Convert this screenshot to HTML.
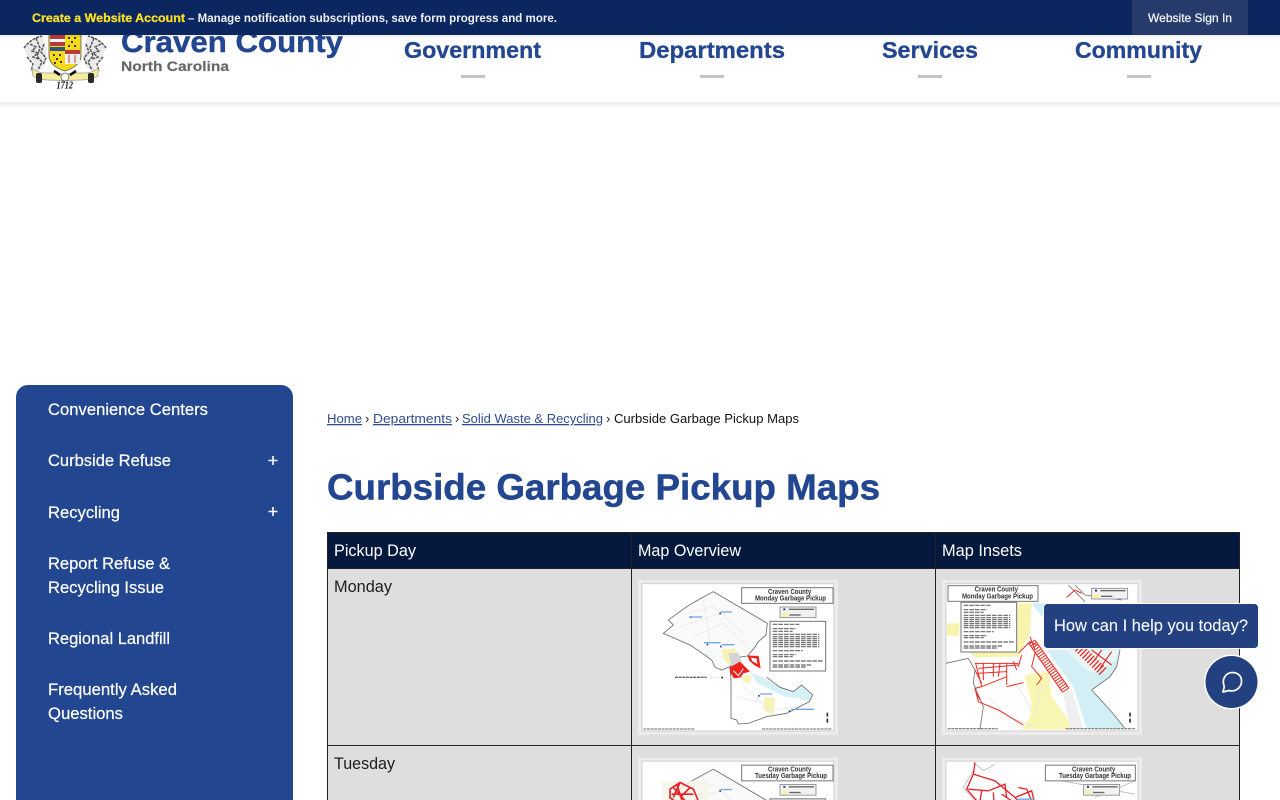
<!DOCTYPE html>
<html lang="en"><head><meta charset="utf-8"><title>Curbside Garbage Pickup Maps</title>
<style>
html,body{margin:0;padding:0;background:#fff;width:1280px;height:800px;overflow:hidden}
svg{display:block}
text{font-family:"Liberation Sans",Arial,sans-serif}
a{cursor:pointer}
.nav{font-size:23px;font-weight:700;fill:#234690;stroke:#234690;stroke-width:.3px}
.side{font-size:16.5px;fill:#fff}
.bc{font-size:13px}
.lnk{fill:#2f4d8f;text-decoration:underline}
.th{font-size:16.5px;fill:#fff}
.td{font-size:16.5px;fill:#1c1c1c}
.t1{font-size:21px;font-weight:700;fill:#333}
</style></head><body>
<svg width="1280" height="800" viewBox="0 0 1280 800" xmlns="http://www.w3.org/2000/svg">
<defs>
<linearGradient id="sh" x1="0" y1="0" x2="0" y2="1"><stop offset="0" stop-color="#000" stop-opacity=".07"/><stop offset="1" stop-color="#000" stop-opacity="0"/></linearGradient>
<clipPath id="pg"><rect x="0" y="0" width="1280" height="800"/></clipPath>
<filter id="b" x="-5%" y="-5%" width="110%" height="110%"><feGaussianBlur stdDeviation="1"/></filter>
<filter id="c" x="-5%" y="-5%" width="110%" height="110%"><feGaussianBlur stdDeviation=".35"/></filter>

<g id="frame">
<rect x="24" y="30" width="600" height="465" fill="#ececec"/>
<rect x="36" y="41" width="576" height="442" fill="#fff" stroke="#cfcfcf" stroke-width="3"/>
</g>
<g id="county">
<path d="M360,305L400,322L450,352L490,365L515,345L545,375L538,395L505,385L465,380L420,358L380,338Z" fill="#d6f1f6"/>
<path d="M250,65L412,160L408,195L385,215L372,235L352,258L325,262L300,290L275,300L255,292L245,270L210,245L180,225L100,190L130,165L115,150L170,110L195,95Z" fill="#fafafa" stroke="#6a6a6a" stroke-width="2.500"/>
<path d="M300,295L303,325L303,445L320,450L325,462L355,460L410,440L470,430L538,395L548,375L515,345L490,365L450,352L410,322" fill="none" stroke="#6a6a6a" stroke-width="2.500"/>
<path d="M275,238L315,235L325,260L295,285L280,265Z" fill="#f6f3b5"/>
<path d="M295,250L325,248L335,275L305,290Z" fill="#d4d4d4"/>
<path d="M405,380L435,385L430,435L400,420Z" fill="#f6f3b5"/>
<path d="M335,320L365,315L360,340L340,338Z" fill="#f6f3b5"/>
<path d="M170,130L250,110L340,190M190,200L280,160L350,230M340,350L420,420L500,410M320,380L400,400M220,90L240,220M150,170L300,120" fill="none" stroke="#ececec" stroke-width="3"/>
<rect x="180" y="139" width="5" height="5" fill="#25408f"/><rect x="268" y="128" width="5" height="5" fill="#25408f"/><rect x="230" y="221" width="5" height="5" fill="#25408f"/><rect x="270" y="227" width="5" height="5" fill="#25408f"/><rect x="384" y="375" width="5" height="5" fill="#25408f"/><rect x="476" y="421" width="5" height="5" fill="#25408f"/>
<path d="M178,141h38M272,126h34M222,218h50M276,224h38M390,372h36M484,418h68" stroke="#6fa6e6" stroke-width="4"/>
<path d="M135,322h95" stroke="#666" stroke-width="4" stroke-dasharray="9 2"/><path d="M240,322h30" stroke="#ddd" stroke-width="2"/><rect x="274" y="320" width="5" height="5" fill="#222"/>
<path d="M592,428v12M592,446v12" stroke="#333" stroke-width="5"/>
<path d="M40,477h155M396,477h210" stroke="#888" stroke-width="4" stroke-dasharray="9 2"/>
</g>
<g id="tbox">
<rect x="335" y="53" width="274" height="47" fill="#fff" stroke="#777" stroke-width="3"/>
<rect x="450" y="111" width="108" height="32" fill="#f2f2f2" stroke="#888" stroke-width="2.500"/>
<rect x="476" y="116" width="76" height="4" fill="#666"/><rect x="460" y="115" width="6" height="6" fill="#25408f"/>
<rect x="455" y="130" width="18" height="10" fill="#f6f3a8"/><rect x="478" y="133" width="34" height="4" fill="#666"/>
</g>
<g id="info">
<rect x="420" y="154" width="167" height="149" fill="#fff" stroke="#777" stroke-width="3"/>
<path d="M428,163h80M428,176h70M428,184h60M428,193h140M428,200h140M428,206h140M428,212h140M428,218h140M428,224h140M428,230h140M428,242h90M428,254h70M428,260h60M428,273h150M428,285h115M428,291h100" stroke="#666" stroke-width="3.500" stroke-dasharray="14 3"/>
</g>
</defs>

<!-- header -->
<rect x="0" y="35" width="1280" height="67" fill="#fff"/>
<rect x="0" y="102" width="1280" height="7" fill="url(#sh)"/>

<!-- crest -->
<g filter="url(#c)">
<path d="M24,48C28,42 34,38 42,36C46,44 47,52 46,60C44,68 40,72 34,72C36,66 34,60 28,58Z" fill="#eaeaea"/>
<path d="M106,48C102,42 96,38 88,36C84,44 83,52 84,60C86,68 90,72 96,72C94,66 96,60 102,58Z" fill="#eaeaea"/>
<path d="M24,48C28,42 34,38 42,36M30,44l6,3l-4,4l6,2l-5,4l6,2M36,38l4,10l-3,8l5,6l-4,8M27,57l6,7l-2,7M44,44l-3,8l5,6l-3,7M101,44l-6,3l4,4l-6,2l5,4l-6,2M94,38l-4,10l3,8l-5,6l4,8M103,57l-6,7l2,7M86,44l3,8l-5,6l3,7M106,48C102,42 96,38 88,36" fill="none" stroke="#555" stroke-width="1.500" stroke-dasharray="3 1"/>
<path d="M49,33H81V56C81,64 72,69 65,71C58,69 49,64 49,56Z" fill="#f5da1e" stroke="#555" stroke-width=".8"/>
<rect x="50" y="35" width="15" height="4" fill="#b73a3a"/><rect x="50" y="39" width="15" height="3" fill="#f5f5f5"/><rect x="50" y="42" width="15" height="4" fill="#b73a3a"/>
<rect x="50" y="47" width="15" height="4" fill="#31527f"/>
<rect x="65" y="50" width="15" height="4" fill="#b73a3a"/><rect x="65" y="54" width="15" height="10" fill="#f0f0f0"/><path d="M69,55v8M75,55v8" stroke="#b73a3a" stroke-width="1"/>
<path d="M68,38h2M74,38h2M71,42h2M68,46h2M74,46h2M53,55h2M59,55h2M56,59h2M54,63h2M60,62h2" stroke="#222" stroke-width="1.800"/>
<path d="M32,68C42,77 52,70 64,75C78,70 88,77 98,68L98,76C88,82 76,79 65,81C52,79 42,82 33,76Z" fill="#f7ee9d" stroke="#999" stroke-width=".7"/>
<circle cx="65" cy="77" r="4" fill="#fff" stroke="#555" stroke-width=".7"/>
<path d="M54,71l6,4M76,71l-6,4" stroke="#111" stroke-width="2.600"/>
<rect x="36" y="73" width="6" height="10" rx="2" fill="#2a2a2a"/><rect x="88" y="73" width="6" height="10" rx="2" fill="#2a2a2a"/>
</g>
<text x="56.500" y="88.500" font-size="10" font-weight="700" font-style="italic" style="font-family:'Liberation Serif',serif" fill="#111" textLength="16.500" lengthAdjust="spacingAndGlyphs">1712</text>

<text x="121" y="52" font-size="30" font-weight="700" fill="#234690" stroke="#234690" stroke-width=".4" textLength="222" lengthAdjust="spacingAndGlyphs">Craven County</text>
<text x="121" y="71" font-size="14" font-weight="700" fill="#666" stroke="#666" stroke-width=".15" textLength="108" lengthAdjust="spacingAndGlyphs">North Carolina</text>

<a><text class="nav" x="404" y="58" textLength="137" lengthAdjust="spacingAndGlyphs">Government</text></a>
<a><text class="nav" x="639" y="58" textLength="146" lengthAdjust="spacingAndGlyphs">Departments</text></a>
<a><text class="nav" x="882" y="58" textLength="96" lengthAdjust="spacingAndGlyphs">Services</text></a>
<a><text class="nav" x="1075" y="58" textLength="127" lengthAdjust="spacingAndGlyphs">Community</text></a>
<rect x="461" y="75" width="24" height="3" fill="#c4c4c4"/><rect x="700" y="75" width="24" height="3" fill="#c4c4c4"/><rect x="918" y="75" width="24" height="3" fill="#c4c4c4"/><rect x="1127" y="75" width="24" height="3" fill="#c4c4c4"/>

<!-- top bar -->
<rect x="0" y="35" width="1280" height="4" fill="url(#sh)"/>
<rect x="0" y="0" width="1280" height="35" fill="#0c2660"/>
<rect x="1132" y="0" width="116" height="35" fill="#263a6c"/>
<text x="32" y="22" font-size="12" font-weight="700" fill="#fbe122" stroke="#fbe122" stroke-width=".25" textLength="153" lengthAdjust="spacingAndGlyphs">Create a Website Account</text>
<text x="188" y="22" font-size="12" font-weight="700" fill="#eef0f6" textLength="369" lengthAdjust="spacingAndGlyphs">– Manage notification subscriptions, save form progress and more.</text>
<text x="1148" y="22" font-size="12" fill="#f2f4f8" stroke="#f2f4f8" stroke-width=".25" textLength="84" lengthAdjust="spacingAndGlyphs">Website Sign In</text>

<!-- sidebar -->
<path d="M16,800V397a12,12 0 0 1 12,-12H281a12,12 0 0 1 12,12V800Z" fill="#234690"/>
<g stroke="#fff" stroke-width=".2">
<text class="side" x="48" y="415" textLength="160" lengthAdjust="spacingAndGlyphs">Convenience Centers</text>
<text class="side" x="48" y="466" textLength="123" lengthAdjust="spacingAndGlyphs">Curbside Refuse</text>
<text class="side" x="48" y="518" textLength="72" lengthAdjust="spacingAndGlyphs">Recycling</text>
<text class="side" x="48" y="569" textLength="122" lengthAdjust="spacingAndGlyphs">Report Refuse &amp;</text>
<text class="side" x="48" y="593" textLength="116" lengthAdjust="spacingAndGlyphs">Recycling Issue</text>
<text class="side" x="48" y="644" textLength="122" lengthAdjust="spacingAndGlyphs">Regional Landfill</text>
<text class="side" x="48" y="695" textLength="129" lengthAdjust="spacingAndGlyphs">Frequently Asked</text>
<text class="side" x="48" y="719" textLength="75" lengthAdjust="spacingAndGlyphs">Questions</text>
</g>
<path d="M268.500,460.500h9M273,456v9M268.500,511.500h9M273,507v9" stroke="#fff" stroke-width="1.600"/>

<!-- breadcrumb -->
<text class="bc lnk" x="327" y="423" textLength="35" lengthAdjust="spacingAndGlyphs">Home</text>
<text class="bc" x="365" y="423" fill="#222">›</text>
<text class="bc lnk" x="373" y="423" textLength="79" lengthAdjust="spacingAndGlyphs">Departments</text>
<text class="bc" x="455" y="423" fill="#222">›</text>
<text class="bc lnk" x="462" y="423" textLength="141" lengthAdjust="spacingAndGlyphs">Solid Waste &amp; Recycling</text>
<text class="bc" x="606" y="423" fill="#222">›</text>
<text class="bc" x="614" y="423" fill="#111" textLength="185" lengthAdjust="spacingAndGlyphs">Curbside Garbage Pickup Maps</text>

<text x="327" y="499.500" font-size="36" font-weight="700" fill="#234690" stroke="#234690" stroke-width=".5" textLength="553" lengthAdjust="spacingAndGlyphs">Curbside Garbage Pickup Maps</text>

<!-- table -->
<rect x="327" y="532" width="913" height="37" fill="#05193f"/>
<rect x="327" y="569" width="913" height="231" fill="#dedede"/>
<path d="M327.500,532V800M631.500,532V800M935.500,532V800M1239.500,532V800" stroke="#222" stroke-width="1"/>
<path d="M327,532.500H1240M327,568.500H1240M327,745.500H1240" stroke="#222" stroke-width="1"/>
<text class="th" x="334" y="556" textLength="82" lengthAdjust="spacingAndGlyphs">Pickup Day</text>
<text class="th" x="638" y="556" textLength="103" lengthAdjust="spacingAndGlyphs">Map Overview</text>
<text class="th" x="942" y="556" textLength="80" lengthAdjust="spacingAndGlyphs">Map Insets</text>
<text class="td" x="334" y="592" textLength="58" lengthAdjust="spacingAndGlyphs">Monday</text>
<text class="td" x="334" y="769" textLength="61" lengthAdjust="spacingAndGlyphs">Tuesday</text>

<!-- Monday overview -->
<g transform="translate(630,570) scale(.33333)" filter="url(#b)">
<use href="#frame"/><use href="#county"/><use href="#tbox"/><use href="#info"/>
<path d="M298,293L330,275L360,305L340,310L332,322L312,325L302,310Z" fill="#f0231f"/>
<path d="M352,256L386,258L392,296L372,285L358,272Z" fill="#f0231f"/><path d="M362,263L380,266L382,282L368,274Z" fill="#fff"/>
<path d="M310,302L325,317L340,296" fill="none" stroke="#fff" stroke-width="3"/>
<text class="t1" x="414" y="72" textLength="130" lengthAdjust="spacingAndGlyphs">Craven County</text>
<text class="t1" x="375" y="92" textLength="213" lengthAdjust="spacingAndGlyphs">Monday Garbage Pickup</text>
</g>

<!-- Monday inset -->
<g transform="translate(935,570) scale(.33333)" filter="url(#b)">
<rect x="21" y="30" width="600" height="465" fill="#ececec"/>
<rect x="33" y="41" width="576" height="442" fill="#fff" stroke="#cfcfcf" stroke-width="3"/>
<!-- water, land -->
<path d="M250,100L290,100L400,240L335,240L415,350L455,475L570,475L525,420L470,360L525,320L545,290L555,240L555,100Z" fill="#d2eff5"/>
<path d="M390,240L465,310L540,275L555,240Z" fill="#e8f6f8"/>
<path d="M245,100L290,100L285,190L250,260L120,262L90,230L245,230Z" fill="#f8f4ae"/>
<path d="M36,160L75,160L70,200L36,195Z" fill="#f8f4ae"/>
<path d="M268,315L340,305L350,380L400,450L420,478H262L285,440L290,400Z" fill="#f9f5b2"/>
<path d="M385,370L410,355L445,475H405Z" fill="#efefef"/>
<path d="M33,280L100,265L120,300L115,340L145,410L135,478M400,45L450,95M470,360L525,420L570,475M470,360L525,320L545,290L555,240M420,45L450,75L560,90" fill="none" stroke="#6f6f6f" stroke-width="2.500"/>
<path d="M160,380L220,440L300,470M250,350L290,420M320,340L300,440" fill="none" stroke="#e6e6e6" stroke-width="2.500"/>
<!-- red roads -->
<g fill="none" stroke="#ee2a22">
<path d="M290,215L392,362" stroke-width="22" stroke-dasharray="3 5"/>
<path d="M280,218L382,366M300,210L402,355M285,200L300,240M250,250L285,215L305,225M260,255L250,290M300,250L290,290L320,325L305,345" stroke-width="3"/>
<path d="M120,280L250,280M130,295L250,285M145,280V330M175,280V320M195,280L190,320M215,280V345M235,275L245,300" stroke-width="3"/>
<path d="M122,280L140,350L120,355L130,395L190,420L265,465M125,310L215,305M140,350L215,320M215,350L265,338M120,300L140,340M122,365L135,390" stroke-width="3"/>
<path d="M430,232L505,305" stroke-width="30" stroke-dasharray="4 6"/>
<path d="M470,240L530,285M500,240L475,275M530,245L495,295" stroke-width="3.500"/>
<path d="M395,82L420,60L440,70" stroke-width="3"/>
</g>
<path d="M585,428v12M585,446v12" stroke="#333" stroke-width="5"/>
<path d="M38,476h150M392,476h210" stroke="#888" stroke-width="4" stroke-dasharray="9 2"/>
<rect x="39" y="47" width="270" height="47" fill="#fff" stroke="#777" stroke-width="3"/>
<text class="t1" x="119" y="65" textLength="130" lengthAdjust="spacingAndGlyphs">Craven County</text>
<text class="t1" x="81" y="86" textLength="213" lengthAdjust="spacingAndGlyphs">Monday Garbage Pickup</text>
<rect x="470" y="55" width="108" height="32" fill="#f2f2f2" stroke="#888" stroke-width="2.500"/>
<rect x="496" y="60" width="76" height="4" fill="#666"/><rect x="480" y="59" width="6" height="6" fill="#25408f"/>
<rect x="475" y="74" width="18" height="10" fill="#f6f3a8"/><rect x="498" y="77" width="34" height="4" fill="#666"/>
<g transform="translate(-342,-57)"><use href="#info"/></g>
</g>

<!-- Tuesday overview -->
<g clip-path="url(#pg)">
<g transform="translate(630,747.500) scale(.33333)" filter="url(#b)">
<use href="#frame"/><use href="#county"/><use href="#tbox"/>
<rect x="420" y="154" width="167" height="30" fill="#eee" stroke="#777" stroke-width="3"/>
<rect x="95" y="100" width="140" height="110" fill="#f5f5e8" opacity=".8"/>
<path d="M120,125L150,105L190,125L205,160L170,190L120,150ZM140,110L160,170M180,120L150,150M125,140L190,140M130,120L170,165M150,105L130,150" fill="none" stroke="#e8202b" stroke-width="5"/>
<text class="t1" x="414" y="72" textLength="130" lengthAdjust="spacingAndGlyphs">Craven County</text>
<text class="t1" x="375" y="92" textLength="216" lengthAdjust="spacingAndGlyphs">Tuesday Garbage Pickup</text>
</g>

<!-- Tuesday inset -->
<g transform="translate(935,747.500) scale(.33333)" filter="url(#b)">
<rect x="21" y="30" width="600" height="465" fill="#ececec"/>
<rect x="33" y="41" width="576" height="442" fill="#fff" stroke="#cfcfcf" stroke-width="3"/>
<path d="M115,45L145,70L180,50M115,70L85,120L120,160M380,100L600,140M480,150L600,100" fill="none" stroke="#bbb" stroke-width="2.500"/>
<path d="M120,45L115,80L95,125L130,165M115,80L180,100L240,150L290,130L300,170M100,125L160,130L210,110L215,150M140,130L130,190M175,135L180,200M240,150L300,215M250,120L275,125L290,160M200,140L260,180" fill="none" stroke="#e8202b" stroke-width="4"/>
<path d="M245,155h52" stroke="#6fa6e6" stroke-width="4"/>
<rect x="331" y="53" width="270" height="47" fill="#fff" stroke="#777" stroke-width="3"/>
<text class="t1" x="411" y="72" textLength="130" lengthAdjust="spacingAndGlyphs">Craven County</text>
<text class="t1" x="372" y="92" textLength="216" lengthAdjust="spacingAndGlyphs">Tuesday Garbage Pickup</text>
<rect x="446" y="111" width="108" height="32" fill="#f2f2f2" stroke="#888" stroke-width="2.500"/>
<rect x="472" y="116" width="76" height="4" fill="#666"/><rect x="456" y="115" width="6" height="6" fill="#25408f"/>
<rect x="451" y="130" width="18" height="10" fill="#f6f3a8"/><rect x="474" y="133" width="34" height="4" fill="#666"/>
</g>
</g>

<!-- chat widget -->
<rect x="1043" y="603" width="216" height="46" rx="5" fill="#fff"/>
<rect x="1044" y="604" width="214" height="44" rx="3.500" fill="#234080"/>
<text x="1054" y="631" font-size="17" fill="#f0f3f8" stroke="#f0f3f8" stroke-width=".15" textLength="194" lengthAdjust="spacingAndGlyphs">How can I help you today?</text>
<circle cx="1231.500" cy="682" r="27.500" fill="#fff"/>
<circle cx="1231.500" cy="682" r="26" fill="#234080"/>
<path d="M1223,692L1224.300,686.500C1221.500,680 1225,673 1232,672.500C1239,672.300 1242,677.500 1241.500,682C1241,688 1235,692.300 1229,690.500Z" fill="none" stroke="#fff" stroke-width="1.700" stroke-linejoin="round"/>
</svg>
</body></html>
